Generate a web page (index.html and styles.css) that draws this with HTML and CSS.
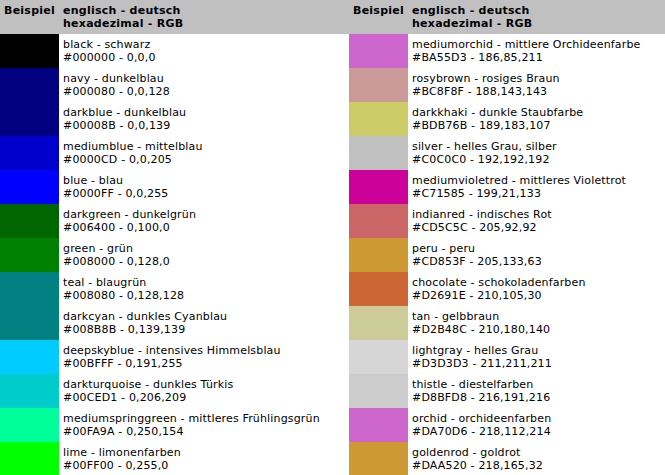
FILE: index.html
```html
<!DOCTYPE html>
<html lang="de">
<head>
<meta charset="utf-8">
<title>Farbnamen</title>
<link rel="stylesheet" href="styles.css">
</head>
<body>
<table class="colors">
  <colgroup>
    <col class="c-sw"><col class="c-txt-l"><col class="c-sw2"><col class="c-txt-r">
  </colgroup>
  <thead>
    <tr>
      <th class="h-sw">Beispiel</th><th class="h-txt">englisch - deutsch<br>hexadezimal - RGB</th>
      <th class="h-sw">Beispiel</th><th class="h-txt">englisch - deutsch<br>hexadezimal - RGB</th>
    </tr>
  </thead>
  <tbody>
    <tr><td class="sw" style="background:#000000"></td><td class="txt">black - schwarz<br>#000000 - 0,0,0</td>
        <td class="sw" style="background:#CC66CC"></td><td class="txt">mediumorchid - mittlere Orchideenfarbe<br>#BA55D3 - 186,85,211</td></tr>
    <tr><td class="sw" style="background:#000080"></td><td class="txt">navy - dunkelblau<br>#000080 - 0,0,128</td>
        <td class="sw" style="background:#CC9999"></td><td class="txt">rosybrown - rosiges Braun<br>#BC8F8F - 188,143,143</td></tr>
    <tr><td class="sw" style="background:#000080"></td><td class="txt">darkblue - dunkelblau<br>#00008B - 0,0,139</td>
        <td class="sw" style="background:#CCCC66"></td><td class="txt">darkkhaki - dunkle Staubfarbe<br>#BDB76B - 189,183,107</td></tr>
    <tr><td class="sw" style="background:#0000CC"></td><td class="txt">mediumblue - mittelblau<br>#0000CD - 0,0,205</td>
        <td class="sw" style="background:#C0C0C0"></td><td class="txt">silver - helles Grau, silber<br>#C0C0C0 - 192,192,192</td></tr>
    <tr><td class="sw" style="background:#0000FF"></td><td class="txt">blue - blau<br>#0000FF - 0,0,255</td>
        <td class="sw" style="background:#CC0099"></td><td class="txt">mediumvioletred - mittleres Violettrot<br>#C71585 - 199,21,133</td></tr>
    <tr><td class="sw" style="background:#006600"></td><td class="txt">darkgreen - dunkelgrün<br>#006400 - 0,100,0</td>
        <td class="sw" style="background:#CC6666"></td><td class="txt">indianred - indisches Rot<br>#CD5C5C - 205,92,92</td></tr>
    <tr><td class="sw" style="background:#008000"></td><td class="txt">green - grün<br>#008000 - 0,128,0</td>
        <td class="sw" style="background:#CC9933"></td><td class="txt">peru - peru<br>#CD853F - 205,133,63</td></tr>
    <tr><td class="sw" style="background:#008080"></td><td class="txt">teal - blaugrün<br>#008080 - 0,128,128</td>
        <td class="sw" style="background:#CC6633"></td><td class="txt">chocolate - schokoladenfarben<br>#D2691E - 210,105,30</td></tr>
    <tr><td class="sw" style="background:#008080"></td><td class="txt">darkcyan - dunkles Cyanblau<br>#008B8B - 0,139,139</td>
        <td class="sw" style="background:#CCCC99"></td><td class="txt">tan - gelbbraun<br>#D2B48C - 210,180,140</td></tr>
    <tr><td class="sw" style="background:#00CCFF"></td><td class="txt">deepskyblue - intensives Himmelsblau<br>#00BFFF - 0,191,255</td>
        <td class="sw" style="background:#D6D6D6"></td><td class="txt">lightgray - helles Grau<br>#D3D3D3 - 211,211,211</td></tr>
    <tr><td class="sw" style="background:#00CCCC"></td><td class="txt">darkturquoise - dunkles Türkis<br>#00CED1 - 0,206,209</td>
        <td class="sw" style="background:#CCCCCC"></td><td class="txt">thistle - diestelfarben<br>#D8BFD8 - 216,191,216</td></tr>
    <tr><td class="sw" style="background:#00FF99"></td><td class="txt">mediumspringgreen - mittleres Frühlingsgrün<br>#00FA9A - 0,250,154</td>
        <td class="sw" style="background:#CC66CC"></td><td class="txt">orchid - orchideenfarben<br>#DA70D6 - 218,112,214</td></tr>
    <tr><td class="sw" style="background:#00FF00"></td><td class="txt">lime - limonenfarben<br>#00FF00 - 0,255,0</td>
        <td class="sw" style="background:#CC9933"></td><td class="txt">goldenrod - goldrot<br>#DAA520 - 218,165,32</td></tr>
  </tbody>
</table>
</body>
</html>
```
FILE: styles.css
```css
html, body {
  margin: 0;
  padding: 0;
  background: #ffffff;
}

.colors {
  border-collapse: collapse;
  table-layout: fixed;
  width: 665px;
  font-family: "DejaVu Sans", Verdana, sans-serif;
  font-size: 11px;
  line-height: 13px;
  letter-spacing: 0.16px;
  color: #000000;
}

.c-sw { width: 59px; }
.c-txt-l { width: 290px; }
.c-sw2 { width: 59px; }
.c-txt-r { width: 257px; }

.colors th {
  background: #c0c0c0;
  font-weight: bold;
  text-align: left;
  vertical-align: top;
  height: 34px;
  box-sizing: border-box;
  padding: 4px 4px;
  white-space: nowrap;
  letter-spacing: 0.25px;
}

.colors td {
  height: 34px;
  box-sizing: border-box;
  padding: 0;
  vertical-align: middle;
}

.colors td.txt {
  padding: 4px 4px;
  white-space: nowrap;
}
```
